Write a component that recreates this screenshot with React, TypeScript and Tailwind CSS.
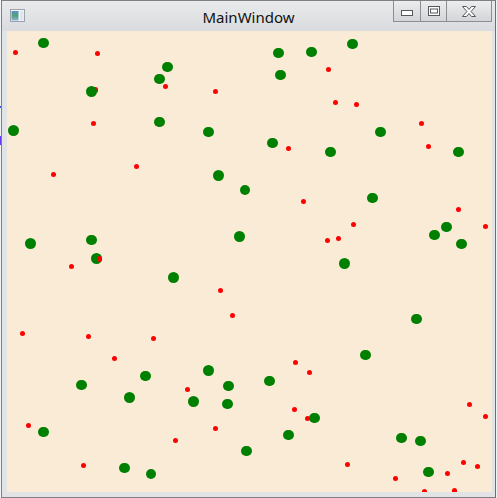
import React from 'react';

type Pt = [number, number];

// window-space centres of the plotted points
const GREEN: Pt[] = [
  [43.7, 43], [167.7, 67], [159.7, 79], [91.7, 91.7], [13.3, 130.7], [159.7, 122], [208.7, 132],
  [218.7, 175.7], [245, 190], [239.3, 236.7], [30.7, 243.7], [91.7, 240], [96.7, 258.7],
  [278.7, 53], [311.7, 52], [352.7, 44], [280.7, 75], [380.7, 132], [272.7, 143], [330.7, 152],
  [458.7, 152], [372.7, 198], [446.7, 227], [434.7, 235], [461.7, 244], [344.7, 263.5],
  [173.7, 277.7], [208.7, 370.7], [145.7, 376], [81.7, 385], [228.7, 386], [129.7, 397.7],
  [193.7, 401.7], [227.7, 404], [43.7, 432], [246.7, 451], [124.7, 468], [151, 474],
  [416.7, 319], [365.7, 355], [269.7, 381], [314.7, 418], [288.7, 435], [401.7, 438],
  [420.7, 441], [428.7, 472],
];

// drawn below the green layer
const RED_BELOW: Pt[] = [[95.7, 90]];

const RED: Pt[] = [
  [15.3, 52.3], [97.3, 53.3], [165.3, 86.3], [215.3, 91.3], [93.3, 123.3], [136.3, 166.3],
  [53.3, 174.3], [99.3, 259], [71.3, 266.3],
  [328.3, 69.3], [335.3, 102.3], [356.3, 104.3], [421.3, 123.3], [288.3, 148.3], [428.3, 146.3],
  [303.3, 201.3], [458.3, 209.3], [485.3, 226.3], [353.3, 224.3], [327.3, 240.3], [338.3, 238.3],
  [220.3, 290.3], [232.3, 315.3], [22.3, 333.3], [88.3, 336.3], [153.3, 338.3], [114.3, 358.3],
  [187.3, 389.3], [28.3, 425.3], [215.3, 428.3], [175.3, 440.3], [83.3, 465.3],
  [295.3, 362.3], [309.3, 372.3], [294.3, 409.3], [307.3, 418.3], [469.3, 404.3], [485.3, 416.3],
  [347.3, 464.3], [395.3, 478.3], [447.3, 473.3], [463.3, 462.3], [477.3, 466.3], [424.3, 492],
  [454.3, 491],
];

const CANVAS_X = 7;
const CANVAS_Y = 31;

function Dot({ p, size, className }: { p: Pt; size: number; className: string }) {
  return (
    <div
      className={`absolute rounded-full ${className}`}
      style={{
        left: p[0] - CANVAS_X - size / 2,
        top: p[1] - CANVAS_Y - size / 2,
        width: size,
        height: size,
      }}
    />
  );
}

function AppIcon() {
  return (
    <svg width="15" height="13" viewBox="0 0 15 13">
      <defs>
        <linearGradient id="pane" x1="0" y1="0" x2="0" y2="1">
          <stop offset="0" stopColor="#5b8fc9" />
          <stop offset="0.5" stopColor="#4fa37a" />
          <stop offset="1" stopColor="#8fb0d8" />
        </linearGradient>
      </defs>
      <rect x="0.5" y="0.5" width="14" height="12" fill="#f4f6f8" stroke="#9aa3ad" />
      <rect x="1.5" y="2" width="7" height="9.5" fill="url(#pane)" />
      <rect x="10" y="2" width="3.5" height="9.5" fill="#dfe5ea" />
    </svg>
  );
}

function CaptionButtons() {
  return (
    <div className="flex h-[21px] border-x border-b border-[#8c8e92] bg-gradient-to-b from-[#eceded] to-[#d3d5d8]">
      <div className="flex w-[27px] items-center justify-center border-r border-[#8c8e92] pt-[3px]">
        <svg width="12" height="6" viewBox="0 0 12 6">
          <rect x="0.5" y="0.5" width="11" height="5" fill="#fff" stroke="#55585c" />
        </svg>
      </div>
      <div className="flex w-[26px] items-center justify-center border-r border-[#8c8e92]">
        <svg width="12" height="10" viewBox="0 0 12 10">
          <rect x="0.5" y="0.5" width="11" height="9" fill="#fff" stroke="#55585c" />
          <rect x="2.5" y="3" width="7" height="4" fill="none" stroke="#55585c" />
        </svg>
      </div>
      <div className="flex w-[44px] items-center justify-center">
        <svg width="14" height="11" viewBox="0 0 14 11">
          <path
            d="M0.5 0.5h4l2.5 3 2.5-3h4l-4.5 5 4.5 5h-4l-2.5-3-2.5 3h-4l4.5-5z"
            fill="#fff"
            stroke="#55585c"
            strokeLinejoin="round"
          />
        </svg>
      </div>
    </div>
  );
}

export default function App() {
  return (
    <div className="flex h-[498px] w-[497px] overflow-hidden bg-white">
      {/* desktop sliver showing at the far left */}
      <div className="flex w-[1px] flex-col bg-[#f2f3f6]">
        <div className="h-[106px]" />
        <div className="h-[2px] bg-[#3b55e0]" />
        <div className="h-[28px]" />
        <div className="h-[9px] bg-[#6a3cf0]" />
      </div>

      <div className="flex flex-1 flex-col border border-[#7d8085] border-r-[#6c6f73]">
        {/* title bar */}
        <div className="relative flex h-[30px] items-start bg-gradient-to-b from-[#e9eaec] to-[#d9dbde]">
          <div className="mt-[8px] ml-[8px]">
            <AppIcon />
          </div>
          <div
            className="absolute inset-x-0 top-[6px] text-center text-[15px] leading-[20px] text-[#111]"
            style={{ fontFamily: '"Noto Sans", "Open Sans", sans-serif' }}
          >
            MainWindow
          </div>
          <div className="ml-auto mr-[3px]">
            <CaptionButtons />
          </div>
        </div>

        {/* client area */}
        <div className="flex flex-1 bg-[#e2e3e5] px-[5px] pb-[5px] pr-[3px]">
          <div className="relative flex-1 overflow-hidden bg-[#faebd7]">
            {RED_BELOW.map((p, i) => (
              <Dot key={`rb${i}`} p={p} size={5.5} className="bg-[#ff0000]" />
            ))}
            {GREEN.map((p, i) => (
              <Dot key={`g${i}`} p={p} size={10.5} className="bg-[#008000]" />
            ))}
            {RED.map((p, i) => (
              <Dot key={`r${i}`} p={p} size={5.5} className="bg-[#ff0000]" />
            ))}
          </div>
        </div>
      </div>
      <div className="w-[1px] bg-[#f2f3f6]" />
    </div>
  );
}
